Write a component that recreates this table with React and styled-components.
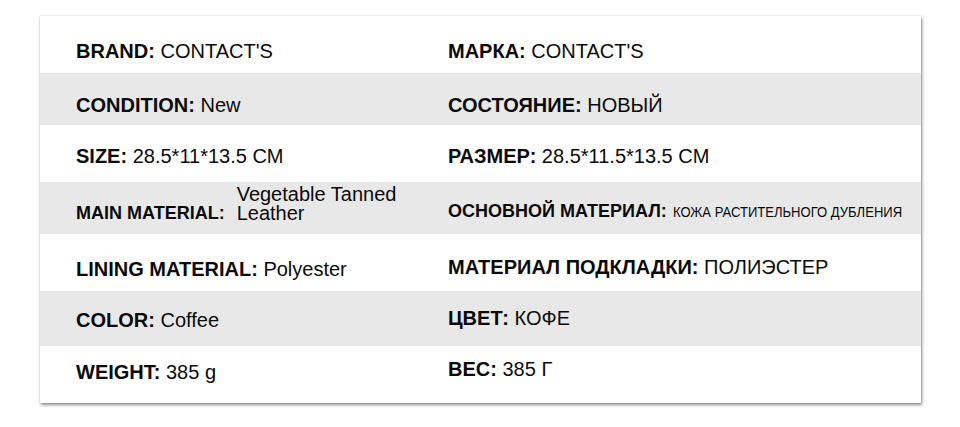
import React from "react";
import styled, { createGlobalStyle } from "styled-components";

const GlobalStyle = createGlobalStyle`
  body {
    margin: 0;
    background: #fff;
    font-family: "Liberation Sans", Arial, sans-serif;
    color: #0a0a0a;
  }
`;

const rows = [
  {
    height: 57,
    pad: 24,
    left: { label: "BRAND:", value: "CONTACT'S" },
    right: { label: "МАРКА:", value: "CONTACT'S" },
  },
  {
    height: 52,
    pad: 21,
    grey: true,
    left: { label: "CONDITION:", value: "New" },
    right: { label: "СОСТОЯНИЕ:", value: "НОВЫЙ" },
  },
  {
    height: 57,
    pad: 20,
    left: { label: "SIZE:", value: "28.5*11*13.5 CM" },
    right: { label: "РАЗМЕР:", value: "28.5*11.5*13.5 CM" },
  },
  {
    height: 52,
    pad: 3,
    grey: true,
    tall: true,
    left: { label: "MAIN MATERIAL:", value: ["Vegetable Tanned", "Leather"] },
    right: { label: "ОСНОВНОЙ МАТЕРИАЛ:", value: "КОЖА РАСТИТЕЛЬНОГО ДУБЛЕНИЯ" },
  },
  {
    height: 57,
    pad: 24,
    lift: 2,
    left: { label: "LINING MATERIAL:", value: "Polyester" },
    right: { label: "МАТЕРИАЛ ПОДКЛАДКИ:", value: "ПОЛИЭСТЕР" },
  },
  {
    height: 55,
    pad: 18,
    lift: 2,
    grey: true,
    left: { label: "COLOR:", value: "Coffee" },
    right: { label: "ЦВЕТ:", value: "КОФЕ" },
  },
  {
    height: 57,
    pad: 15,
    lift: 3,
    left: { label: "WEIGHT:", value: "385 g" },
    right: { label: "ВЕС:", value: "385 Г" },
  },
];

const SpecCard = () => {
  return (
    <Card>
      {rows.map((row, i) => (
        <Row key={i} $height={row.height} $pad={row.pad} $grey={row.grey}>
          {row.tall ? (
            <>
              <StackCell>
                <Label $small>{row.left.label}</Label>
                <StackValue>
                  {row.left.value[0]}
                  <br />
                  {row.left.value[1]}
                </StackValue>
              </StackCell>
              <BaselineCell>
                <Label $small>{row.right.label}</Label>
                <NarrowValue>{row.right.value}</NarrowValue>
              </BaselineCell>
            </>
          ) : (
            <>
              <Cell>
                <Label>{row.left.label}</Label> {row.left.value}
              </Cell>
              <Cell $lift={row.lift}>
                <Label>{row.right.label}</Label> {row.right.value}
              </Cell>
            </>
          )}
        </Row>
      ))}
    </Card>
  );
};

export default function App() {
  return (
    <>
      <GlobalStyle />
      <Page>
        <SpecCard />
      </Page>
    </>
  );
}

const Page = styled.div`
  padding: 16px 0 24px 40px;
`;

const Card = styled.section`
  width: 881px;
  background: #fff;
  box-shadow: 1px 2px 3px rgba(0, 0, 0, 0.45), 0 0 1px rgba(0, 0, 0, 0.25);
`;

const Row = styled.div`
  display: grid;
  grid-template-columns: 372px 1fr;
  box-sizing: border-box;
  height: ${(p) => p.$height}px;
  padding: ${(p) => p.$pad}px 0 0 36px;
  background: ${(p) => (p.$grey ? "#e8e8e8" : "#fff")};
`;

const Cell = styled.div`
  font-size: 20px;
  line-height: 23px;
  white-space: nowrap;
  margin-top: ${(p) => -(p.$lift || 0)}px;
`;

const Label = styled.b`
  font-weight: 700;
  font-size: ${(p) => (p.$small ? "18px" : "20px")};
`;

const StackCell = styled.div`
  display: flex;
  align-items: flex-end;
  gap: 12px;
  height: 38px;
  line-height: 19px;
  font-size: 20px;
  white-space: nowrap;
`;

const StackValue = styled.span`
  display: block;
`;

const BaselineCell = styled.div`
  display: flex;
  align-items: baseline;
  gap: 6px;
  height: 38px;
  padding-top: 18px;
  box-sizing: border-box;
  line-height: 17px;
  white-space: nowrap;
`;

const NarrowValue = styled.span`
  display: inline-block;
  font-size: 15px;
  transform: scaleX(0.87);
  transform-origin: left center;
`;
